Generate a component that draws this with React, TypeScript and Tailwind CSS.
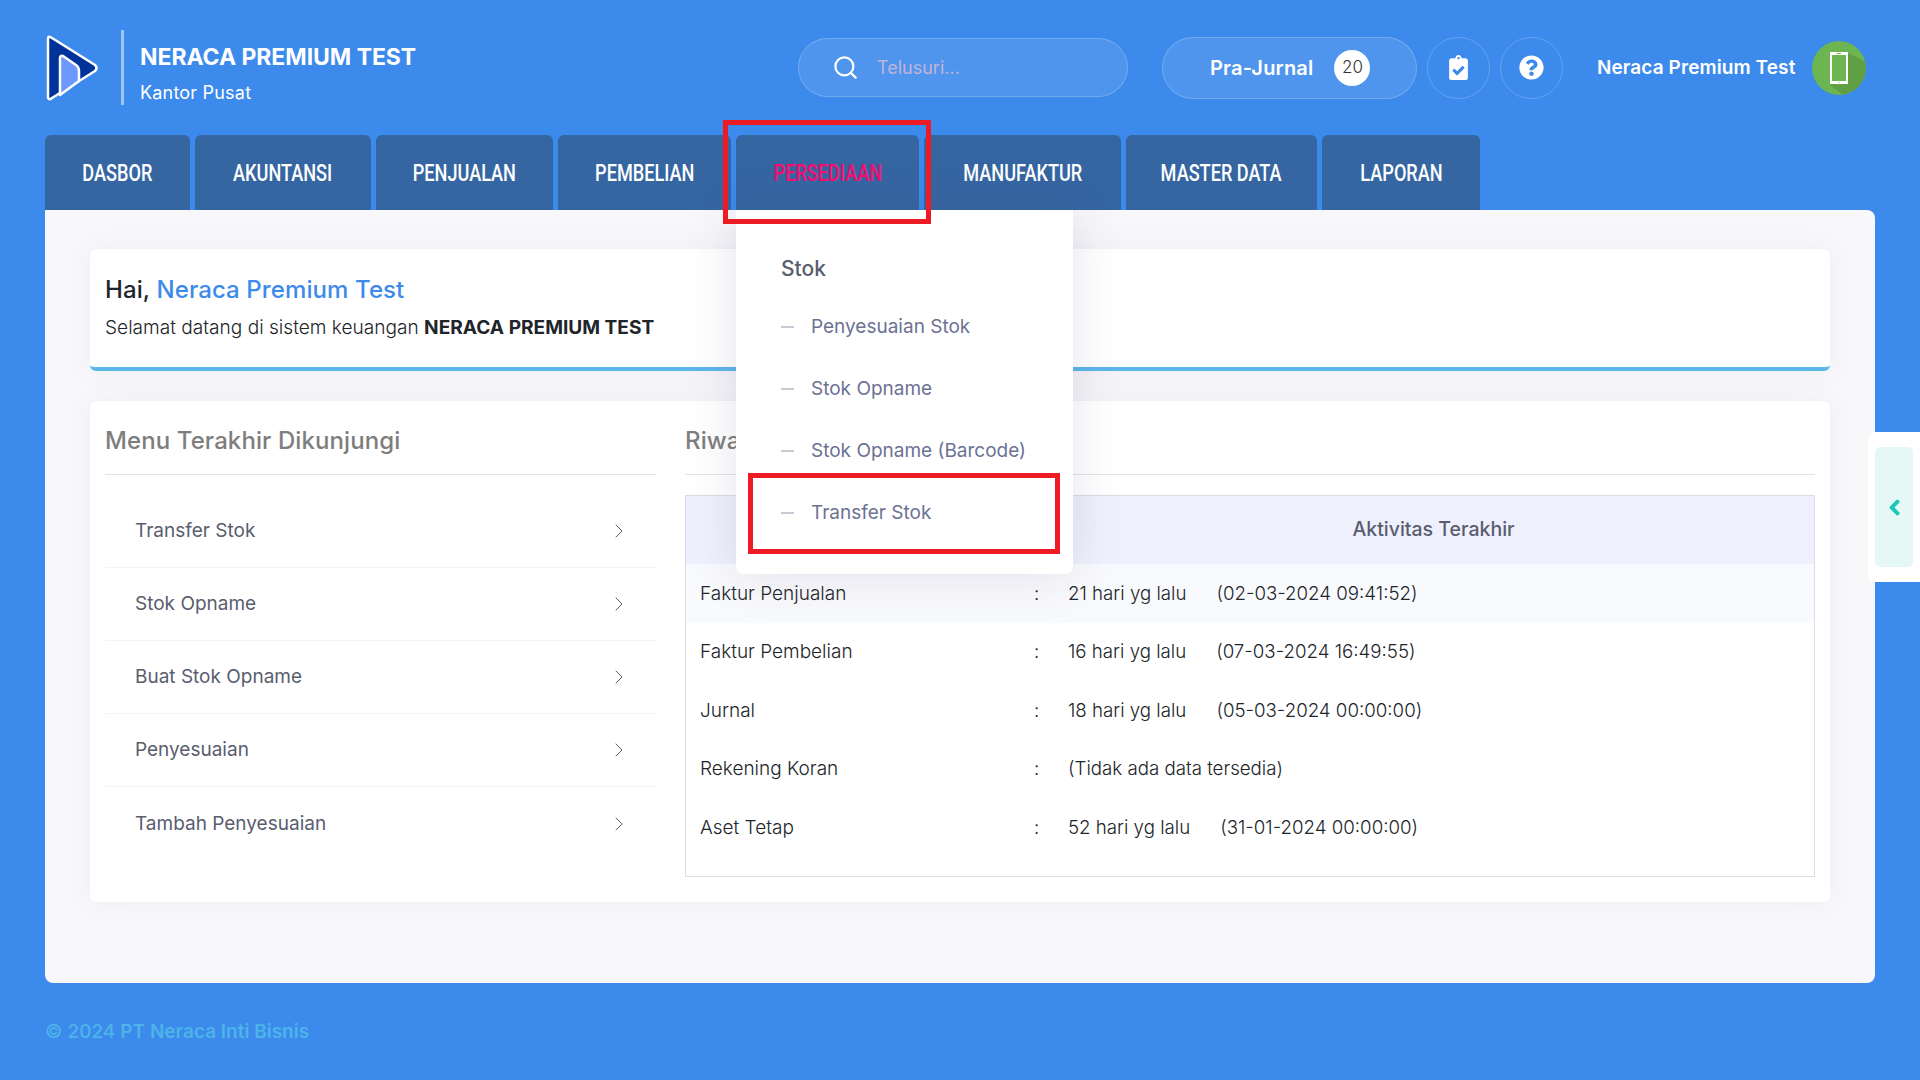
import { Search, ChevronRight } from 'lucide-react';
import { FaClipboardCheck, FaQuestionCircle, FaChevronLeft } from 'react-icons/fa';

const tabs = [
  { label: 'DASBOR', w: 'w-[145px]' },
  { label: 'AKUNTANSI', w: 'w-[176px]' },
  { label: 'PENJUALAN', w: 'w-[177px]' },
  { label: 'PEMBELIAN', w: 'w-[173px]' },
  { label: 'PERSEDIAAN', w: 'w-[183px]', active: true },
  { label: 'MANUFAKTUR', w: 'w-[197px]' },
  { label: 'MASTER DATA', w: 'w-[191px]' },
  { label: 'LAPORAN', w: 'w-[158px]' },
];

const recent = ['Transfer Stok', 'Stok Opname', 'Buat Stok Opname', 'Penyesuaian', 'Tambah Penyesuaian'];

const activity = [
  { name: 'Faktur Penjualan', ago: '21 hari yg lalu', date: '(02-03-2024 09:41:52)' },
  { name: 'Faktur Pembelian', ago: '16 hari yg lalu', date: '(07-03-2024 16:49:55)' },
  { name: 'Jurnal', ago: '18 hari yg lalu', date: '(05-03-2024 00:00:00)' },
  { name: 'Rekening Koran', ago: '', date: '(Tidak ada data tersedia)' },
  { name: 'Aset Tetap', ago: '52 hari yg lalu', date: '(31-01-2024 00:00:00)' },
];

const stockMenu = ['Penyesuaian Stok', 'Stok Opname', 'Stok Opname (Barcode)', 'Transfer Stok'];

function Logo() {
  return (
    <svg width="54" height="68" viewBox="0 0 54 68" className="shrink-0">
      <path d="M3 5 Q3 1 7 4 L50 31 Q53 34 50 37 L7 64 Q3 67 3 63 Z" fill="#003399" stroke="#fff" strokeWidth="2.5" strokeLinejoin="round" />
      <path d="M15 24 Q15 21 18 22 L31 31 Q34 33 34 37 L34 47 L15 61 Z" fill="#6b99ff" stroke="#fff" strokeWidth="2.5" strokeLinejoin="round" />
    </svg>
  );
}

function Avatar() {
  return (
    <div className="w-[54px] h-[54px] rounded-full bg-[#6cb550] overflow-hidden shrink-0">
      <svg width="54" height="54" viewBox="0 0 54 54">
        <path d="M36 12 L60 24 L60 60 L36 58 L18 44 Z" fill="#619f44" />
        <rect x="18" y="11" width="18" height="32" fill="#fff" />
        <rect x="20" y="14" width="14" height="26" fill="#6cb550" />
        <rect x="25" y="12" width="4" height="1" fill="#6cb550" />
        <rect x="26.5" y="41" width="1" height="1" fill="#6cb550" />
      </svg>
    </div>
  );
}

export default function App() {
  return (
    <div className="relative w-full h-[1080px] overflow-hidden bg-[#3c8aeb] font-['Inter','Noto_Sans',sans-serif]">
      {/* header */}
      <div className="h-[135px] flex items-center pl-[45px]">
        <Logo />
        <div className="w-[3px] h-[75px] bg-white/50 ml-[22px] mb-[1px]"></div>
        <div className="ml-[16px] w-[658px] pt-[12px] text-white">
          <div className="text-[23px] leading-[30px] font-bold tracking-[-0.05px]">NERACA PREMIUM TEST</div>
          <div className="text-[18px] leading-[24px] mt-[9px] tracking-[0.2px]">Kantor Pusat</div>
        </div>
        <div className="w-[330px] h-[59px] rounded-full bg-white/10 border border-white/20 flex items-center pl-[33px]">
          <Search size={27} strokeWidth={2} className="text-white" />
          <span className="ml-[18px] text-[18px] text-[#c0b4d8]">Telusuri...</span>
        </div>
        <div className="ml-[34px] w-[255px] h-[62px] rounded-full bg-white/10 border border-white/20 flex items-center pl-[47px]">
          <span className="text-[20px] font-semibold tracking-[0.2px] text-white">Pra-Jurnal</span>
          <span className="ml-[21px] w-[36px] h-[36px] rounded-full bg-white flex items-center justify-center text-[17px] font-light text-[#333]">20</span>
        </div>
        <div className="ml-[10px] w-[63px] h-[62px] rounded-full border border-white/20 flex items-center justify-center">
          <FaClipboardCheck size={25} className="text-white" />
        </div>
        <div className="ml-[10px] w-[63px] h-[62px] rounded-full border border-white/20 flex items-center justify-center">
          <FaQuestionCircle size={25} className="text-white" />
        </div>
        <span className="ml-[34px] w-[215px] pt-[2px] text-[19px] font-semibold tracking-[0.1px] text-white whitespace-nowrap">Neraca Premium Test</span>
        <Avatar />
      </div>

      {/* tabs */}
      <div className="flex gap-[5px] pl-[45px] h-[75px]">
        {tabs.map(t => (
          <div
            key={t.label}
            className={`${t.w} rounded-t-[6px] bg-[#3566a2] flex items-center justify-center text-[24px] font-medium font-['Roboto',sans-serif] ${t.active ? 'text-[#fd0c6f]' : 'text-white'}`}
          >
            <span className="scale-x-[0.755] whitespace-nowrap">{t.label}</span>
          </div>
        ))}
      </div>

      {/* main panel */}
      <div className="mx-[45px] h-[773px] bg-[#f8f8fb] rounded-b-[8px] rounded-tr-[8px] pt-[39px] px-[45px]">
        <div className="h-[122px] bg-white rounded-[6px] border-b-4 border-[#5cb6ea] px-[15px] pt-[24px] shadow-[0_0_30px_rgba(82,63,105,0.06)]">
          <div className="text-[24px] leading-[34px] font-medium tracking-[0.1px] text-[#212529]">
            Hai, <span className="text-[#3c8aeb]">Neraca Premium Test</span>
          </div>
          <div className="mt-[7px] text-[19.1px] leading-[26px] font-light text-[#212529]">
            Selamat datang di sistem keuangan <span className="font-bold">NERACA PREMIUM TEST</span>
          </div>
        </div>

        <div className="mt-[30px] h-[501px] bg-white rounded-[6px] px-[15px] flex gap-[29px] shadow-[0_0_30px_rgba(82,63,105,0.06)]">
          <div className="w-[551px]">
            <div className="h-[74px] border-b border-[#e4e4ea] flex items-center pt-[6px] text-[24px] font-medium tracking-[0.1px] text-[#7e7e7e]">Menu Terakhir Dikunjungi</div>
            <div className="mt-[20px]">
              {recent.map((r, i) => (
                <div key={r} className={`h-[73.1px] flex items-center justify-between pl-[30px] pr-[25px] text-[19px] text-[#595d6e] ${i < 4 ? 'border-b border-[#f3f3f6]' : ''}`}>
                  <span>{r}</span>
                  <ChevronRight size={24} strokeWidth={1} className="text-[#595d6e]" />
                </div>
              ))}
            </div>
          </div>

          <div className="flex-1">
            <div className="h-[74px] border-b border-[#e4e4ea] flex items-center pt-[6px] text-[24px] font-medium tracking-[0.1px] text-[#7e7e7e]">Riwayat Aktivitas</div>
            <div className="mt-[20px] h-[382px] border border-[#dcdce6]">
              <div className="h-[68px] bg-[#eef1fd] flex items-center text-[19.5px] font-medium text-[#595d6e]">
                <div className="w-[367px]"></div>
                <div className="flex-1 text-center">Aktivitas Terakhir</div>
              </div>
              {activity.map((a, i) => (
                <div key={a.name} className={`h-[58.5px] flex items-center pt-[1px] text-[18.7px] font-light text-[#212529] ${i === 0 ? 'bg-[#f9fafd]' : ''}`}>
                  <div className="w-[348px] pl-[14px] text-[19px]">{a.name}</div>
                  <div className="w-[34px]">:</div>
                  {a.ago && <span className="mr-[30px]">{a.ago}</span>}
                  <span>{a.date}</span>
                </div>
              ))}
            </div>
          </div>
        </div>
      </div>

      {/* footer */}
      <div className="pl-[45px] pt-[36px] text-[19px] leading-[26px] font-medium text-[#4db4ea]">
        © 2024 <span className="font-semibold">PT Neraca Inti Bisnis</span>
      </div>

      {/* dropdown menu */}
      <div className="absolute left-[736px] top-[210px] w-[337px] h-[364px] bg-white rounded-b-[8px] shadow-[0_0_50px_rgba(82,63,105,0.15)] pl-[45px] pt-[44px]">
        <div className="h-[30px] flex items-center text-[21px] font-medium text-[#595d6e]">Stok</div>
        <div className="mt-[12px]">
          {stockMenu.map(m => (
            <div key={m} className="h-[62px] flex items-center text-[19px] text-[#6c7293]">
              <span className="w-[13px] h-[2px] bg-[#c9cbd4] mr-[17px]"></span>
              {m}
            </div>
          ))}
        </div>
      </div>

      {/* red highlight boxes */}
      <div className="absolute left-[723px] top-[120px] w-[208px] h-[104px] border-[5px] border-[#ed1c24]"></div>
      <div className="absolute left-[748px] top-[473px] w-[312px] h-[81px] border-[5px] border-[#ed1c24]"></div>

      {/* side toggle */}
      <div className="absolute right-0 top-[432px] w-[52px] h-[150px] bg-white rounded-l-[6px] pl-[7px] py-[15px]">
        <div className="w-[38px] h-[120px] bg-[#e6f8f6] rounded-[5px] flex items-center justify-center">
          <FaChevronLeft size={17} stroke="currentColor" strokeWidth={40} className="text-[#1dc9b7]" />
        </div>
      </div>
    </div>
  );
}
